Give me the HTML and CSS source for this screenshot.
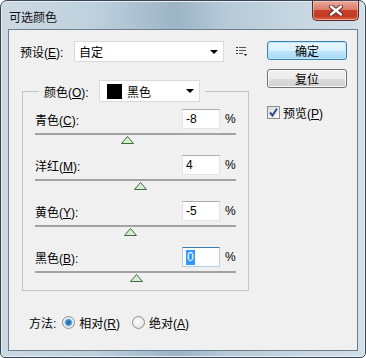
FILE: index.html
```html
<!DOCTYPE html>
<html lang="zh-CN">
<head>
<meta charset="UTF-8">
<title>可选颜色</title>
<link rel="stylesheet" href="styles.css">
</head>
<body>

<div class="window">
    <div class="titlebar">
        <span class="title">可选颜色</span>
        <div class="close">
            <svg width="14" height="11" viewBox="0 0 14 11">
                <path d="M2 1.5 L12 9.5 M12 1.5 L2 9.5" stroke="#5a2a22" stroke-width="4.2" stroke-linecap="round"/>
                <path d="M2 1.5 L12 9.5 M12 1.5 L2 9.5" stroke="#ffffff" stroke-width="2.4" stroke-linecap="round"/>
            </svg>
        </div>
    </div>

    <div class="client">
        <div class="main">
            <div class="preset-row">
                <span class="preset-label">预设(<u>E</u>):</span>
                <div class="combo preset-combo">
                    <span>自定</span>
                    <span class="arrow"></span>
                </div>
                <svg class="list-icon" width="12" height="11" viewBox="0 0 12 11">
                    <rect x="0" y="1" width="2" height="1" fill="#333"/>
                    <rect x="3" y="1" width="7" height="1" fill="#555"/>
                    <rect x="0" y="4" width="2" height="1" fill="#333"/>
                    <rect x="3" y="4" width="7" height="1" fill="#555"/>
                    <rect x="0" y="7" width="2" height="1" fill="#333"/>
                    <rect x="3" y="7" width="4" height="1" fill="#555"/>
                    <path d="M7.5 8 L11.5 8 L9.5 10 Z" fill="#333"/>
                </svg>
            </div>

            <fieldset class="group">
                <legend class="group-head">
                    <span class="colors-label">颜色(<u>O</u>):</span>
                    <div class="combo color-combo">
                        <span class="swatch"></span>
                        <span>黑色</span>
                        <span class="arrow"></span>
                    </div>
                </legend>

                <div class="slider-row">
                    <div class="slider-top">
                        <span class="slider-label">青色(<u>C</u>):</span>
                        <input class="num" type="text" value="-8">
                        <span class="pct">%</span>
                    </div>
                    <div class="track">
                        <svg class="thumb" style="left: 46%" width="13" height="8" viewBox="0 0 13 8"><path d="M6.5 0.5 L12.5 7.5 L0.5 7.5 Z" fill="#d6ecd3" stroke="#3c6b3c"/></svg>
                    </div>
                </div>

                <div class="slider-row">
                    <div class="slider-top">
                        <span class="slider-label">洋红(<u>M</u>):</span>
                        <input class="num" type="text" value="4">
                        <span class="pct">%</span>
                    </div>
                    <div class="track">
                        <svg class="thumb" style="left: 52%" width="13" height="8" viewBox="0 0 13 8"><path d="M6.5 0.5 L12.5 7.5 L0.5 7.5 Z" fill="#d6ecd3" stroke="#3c6b3c"/></svg>
                    </div>
                </div>

                <div class="slider-row">
                    <div class="slider-top">
                        <span class="slider-label">黄色(<u>Y</u>):</span>
                        <input class="num" type="text" value="-5">
                        <span class="pct">%</span>
                    </div>
                    <div class="track">
                        <svg class="thumb" style="left: 47.5%" width="13" height="8" viewBox="0 0 13 8"><path d="M6.5 0.5 L12.5 7.5 L0.5 7.5 Z" fill="#d6ecd3" stroke="#3c6b3c"/></svg>
                    </div>
                </div>

                <div class="slider-row">
                    <div class="slider-top">
                        <span class="slider-label">黑色(<u>B</u>):</span>
                        <div class="num num-focus"><span class="sel">0</span></div>
                        <span class="pct">%</span>
                    </div>
                    <div class="track">
                        <svg class="thumb" style="left: 50%" width="13" height="8" viewBox="0 0 13 8"><path d="M6.5 0.5 L12.5 7.5 L0.5 7.5 Z" fill="#d6ecd3" stroke="#3c6b3c"/></svg>
                    </div>
                </div>
            </fieldset>

            <div class="method-row">
                <span class="method-label">方法:</span>
                <span class="radio checked"></span>
                <span class="radio-text">相对(<u>R</u>)</span>
                <span class="radio"></span>
                <span class="radio-text">绝对(<u>A</u>)</span>
            </div>
        </div>

        <div class="side">
            <button class="btn btn-default">确定</button>
            <button class="btn">复位</button>
            <div class="preview">
                <span class="check">
                    <svg width="11" height="11" viewBox="0 0 11 11"><path d="M2 5.5 L4.5 8.5 L9 1.5" fill="none" stroke="#2e4e8a" stroke-width="2"/></svg>
                </span>
                <span>预览(<u>P</u>)</span>
            </div>
        </div>
    </div>
</div>

</body>
</html>
```

FILE: styles.css
```css
body {
    margin: 0;
    font-family: "Liberation Sans", "Noto Sans CJK SC", sans-serif;
    font-size: 12px;
    color: #000;
    background: #ffffff;
}

.window {
    width: 366px;
    height: 358px;
    box-sizing: border-box;
    padding: 0 7px 7px 7px;
    border: 1px solid #3c4652;
    border-radius: 7px 7px 5px 5px;
    background: linear-gradient(90deg, #cbd9e4 0%, #bfd1de 25%, #9db4c5 48%, #b7cad8 62%, #c9d8e3 85%, #d2dee8 100%);
    box-shadow: inset 0 0 0 1px #e4edf3;
    overflow: hidden;
}

.titlebar {
    height: 28px;
    display: flex;
    align-items: center;
    justify-content: space-between;
}

.title {
    margin-left: 1px;
    margin-top: 2px;
    font-size: 12px;
    color: #101010;
}

.close {
    width: 45px;
    height: 19px;
    margin-right: -1px;
    align-self: flex-start;
    display: flex;
    align-items: center;
    justify-content: center;
    border: 1px solid #5b2c24;
    border-top: none;
    border-radius: 0 0 5px 5px;
    background: linear-gradient(#e9a899 0%, #dc7d68 45%, #c7432d 50%, #c43a22 80%, #dc6f4e 100%);
    box-shadow: inset 0 0 0 1px rgba(255, 220, 210, 0.5);
}

.client {
    height: 322px;
    box-sizing: border-box;
    border: 1px solid #6d7e8d;
    background: #f0f0f0;
    display: flex;
}

.main {
    width: 228px;
    padding-left: 11px;
}

.preset-row {
    display: flex;
    align-items: center;
    margin-top: 11px;
    height: 21px;
}

.preset-label {
    width: 54px;
}

.combo {
    box-sizing: border-box;
    background: #fff;
    border: 1px solid #dadada;
    display: flex;
    align-items: center;
    position: relative;
}

.preset-combo {
    width: 150px;
    height: 21px;
    padding-left: 4px;
}

.arrow {
    position: absolute;
    right: 5px;
    top: 8px;
    width: 0;
    height: 0;
    border-left: 4px solid transparent;
    border-right: 4px solid transparent;
    border-top: 4px solid #000;
}

.list-icon {
    margin-left: 12px;
    margin-top: -1px;
}

.group {
    margin: 18px 0 0 2px;
    padding: 7px 12px 17px 12px;
    border: 1px solid #c4c4c4;
    width: 201px;
}

.group-head {
    margin-left: 4px;
    padding: 0 5px;
    display: flex;
    align-items: center;
}

.colors-label {
    width: 55px;
}

.color-combo {
    width: 101px;
    height: 22px;
    padding-left: 7px;
}

.swatch {
    width: 15px;
    height: 15px;
    background: #000;
    margin-right: 5px;
}

.slider-row {
    margin-bottom: 20px;
}

.slider-row:last-child {
    margin-bottom: 0;
}

.slider-top {
    display: flex;
    align-items: center;
    height: 20px;
}

.slider-label {
    flex: 1;
}

.num {
    width: 38px;
    height: 20px;
    box-sizing: border-box;
    border: 1px solid #e2e3ea;
    border-top-color: #abadb3;
    padding: 0 3px;
    font-family: "Liberation Sans", sans-serif;
    font-size: 12px;
    background: #fff;
    outline: none;
}

.num-focus {
    display: flex;
    align-items: center;
    border-color: #b5cfe7;
    border-top-color: #3d7bad;
}

.sel {
    background: #3399ff;
    color: #fff;
    padding: 0 1px;
    line-height: 15px;
}

.pct {
    margin-left: 5px;
    width: 11px;
}

.track {
    position: relative;
    margin-top: 4px;
    height: 2px;
    background: #a3a3a3;
}

.thumb {
    position: absolute;
    top: 3px;
    margin-left: -6px;
}

.method-row {
    display: flex;
    align-items: center;
    margin-top: 23px;
    margin-left: 9px;
    height: 16px;
}

.method-label {
    margin-right: 6px;
}

.radio {
    width: 11px;
    height: 11px;
    border-radius: 50%;
    border: 1px solid #8e8f8f;
    background: radial-gradient(circle at 40% 40%, #ffffff 0%, #d8d8d8 100%);
    margin-right: 4px;
}

.radio.checked {
    background: radial-gradient(circle, #1f5f99 0%, #3b8fd0 35%, #7fbbe6 45%, #f4f4f4 55%, #d8d8d8 100%);
}

.radio-text {
    margin-right: 12px;
}

.side {
    margin-left: 19px;
    margin-top: 11px;
    display: flex;
    flex-direction: column;
    width: 80px;
}

.btn {
    width: 80px;
    height: 19px;
    padding: 0;
    font-family: "Liberation Sans", "Noto Sans CJK SC", sans-serif;
    font-size: 12px;
    color: #000;
    border: 1px solid #707070;
    border-radius: 3px;
    background: linear-gradient(#f2f2f2 0%, #ebebeb 50%, #dddddd 51%, #cfcfcf 100%);
    box-shadow: inset 0 0 0 1px #fbfbfb;
    margin-bottom: 9px;
}

.btn-default {
    border-color: #3c7fb1;
    background: linear-gradient(#eaf6fd 0%, #d9f0fc 50%, #bee6fd 51%, #a7d9f5 100%);
    box-shadow: inset 0 0 0 1px #bfe7fa;
}

.preview {
    display: flex;
    align-items: center;
    margin-top: 7px;
}

.check {
    width: 11px;
    height: 11px;
    border: 1px solid #8e8f8f;
    background: linear-gradient(135deg, #dcdcdc, #fbfbfb);
    margin-right: 3px;
    display: flex;
}
```
